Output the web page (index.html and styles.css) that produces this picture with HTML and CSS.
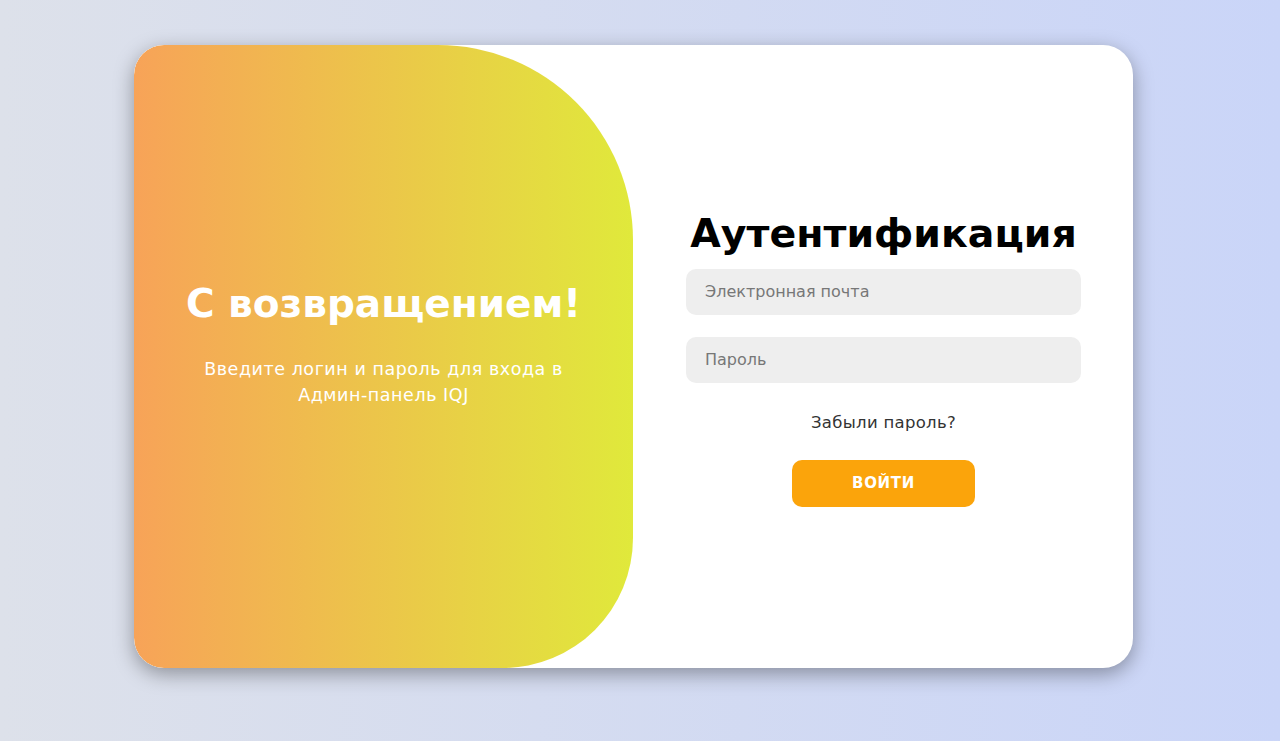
FILE: index.html
```html
<!DOCTYPE html>
<html lang="ru">
<head>
<meta charset="utf-8">
<title>Аутентификация</title>
<link rel="stylesheet" href="styles.css">
</head>
<body>
<div class="page">
  <div class="card">
    <div class="welcome">
      <h1 class="welcome-title">С возвращением!</h1>
      <p class="welcome-text">Введите логин и пароль для входа в Админ-панель IQJ</p>
    </div>
    <form class="auth">
      <h1 class="auth-title">Аутентификация</h1>
      <input class="field" type="email" placeholder="Электронная почта">
      <input class="field" type="password" placeholder="Пароль">
      <a class="forgot" href="#">Забыли пароль?</a>
      <button class="submit" type="button">Войти</button>
    </form>
  </div>
</div>
</body>
</html>
```

FILE: styles.css
```css
* { box-sizing: border-box; }
html, body { margin: 0; padding: 0; }
body {
  font-family: "DejaVu Sans", "Noto Sans", sans-serif;
  background: linear-gradient(to right, #dde1ea, #cad5f8);
  height: 741px;
  overflow: hidden;
}
.page {
  padding: 45px 0 0 134px;
}
.card {
  width: 999px;
  height: 623px;
  background: #fff;
  border-radius: 30px;
  box-shadow: 0 6px 20px rgba(0, 0, 0, 0.35);
  display: flex;
  overflow: hidden;
}
.welcome {
  width: 499px;
  height: 100%;
  background: linear-gradient(to right, #f7a358, #e0e93b);
  border-radius: 30px 195px 130px 30px;
  color: #fff;
  display: flex;
  flex-direction: column;
  align-items: center;
  justify-content: center;
  padding: 0 39px 27px;
  text-align: center;
}
.welcome-title {
  margin: 0;
  font-size: 39px;
  font-weight: 700;
  line-height: 50px;
}
.welcome-text {
  margin: 27px 0 0;
  font-size: 17.5px;
  line-height: 26px;
  letter-spacing: 0.55px;
  width: 380px;
}
.auth {
  flex: 1;
  display: flex;
  flex-direction: column;
  align-items: center;
  justify-content: center;
  padding: 2px 52px 0 53px;
}
.auth-title {
  margin: 0 0 12px;
  font-size: 39.5px;
  font-weight: 700;
  line-height: 48px;
  color: #000;
}
.field {
  width: 100%;
  height: 46px;
  background: #eee;
  border: none;
  border-radius: 10px;
  padding: 0 19px;
  font-family: inherit;
  font-size: 16px;
  color: #333;
  margin: 0 0 22px;
  outline: none;
}
.field::placeholder { color: #777; }
.forgot {
  margin: 7px 0 26px;
  font-size: 16.5px;
  line-height: 22px;
  letter-spacing: 0.3px;
  color: #333;
  text-decoration: none;
}
.submit {
  width: 183px;
  height: 47px;
  background: #fba40b;
  color: #fff;
  border: none;
  border-radius: 10px;
  font-family: inherit;
  font-size: 15px;
  font-weight: 700;
  letter-spacing: 0.65px;
  text-transform: uppercase;
}
```
